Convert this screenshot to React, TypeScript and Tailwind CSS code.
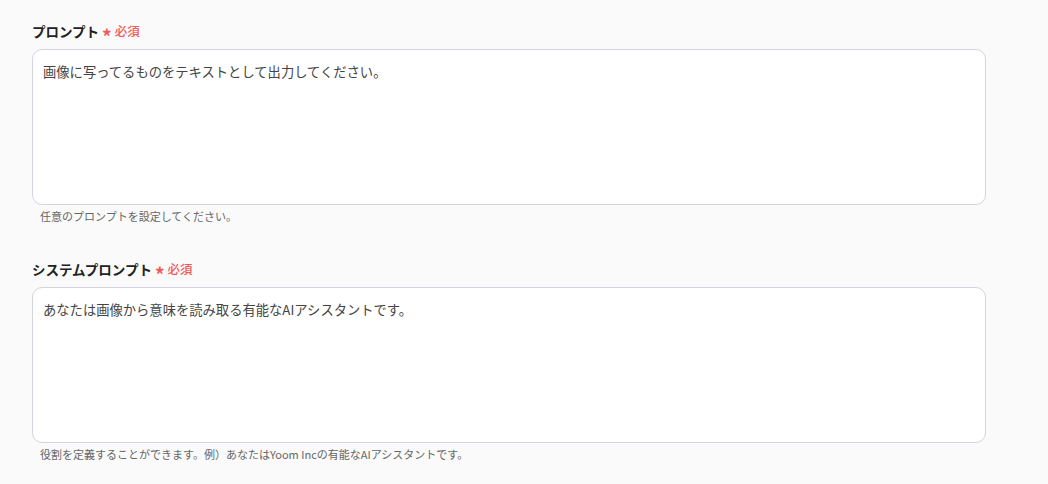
import React from 'react'

const font = { fontFamily: '"Noto Sans CJK JP", "Noto Sans", sans-serif' }

interface FieldProps {
  label: string
  value: string
  help: string
}

function PromptField({ label, value, help }: FieldProps) {
  return (
    <div className="flex flex-col">
      <div className="flex items-center h-5 mb-2">
        <span className="text-[13.5px] font-bold text-[#222]">{label}</span>
        <span className="ml-[3px] text-[19px] font-bold leading-none text-[#f05a5a] translate-y-[4px]">*</span>
        <span className="ml-[3px] text-[12.5px] font-medium text-[#f05a5a]">必須</span>
      </div>
      <textarea
        readOnly
        defaultValue={value}
        className="w-[954px] h-[156px] resize-none rounded-[10px] border border-[#d4d4de] bg-white px-[10px] pt-[12px] text-[13.3px] leading-5 text-[#444] outline-none"
        style={font}
      />
      <p className="mt-[3px] pl-2 text-[11px] leading-4 text-[#666]">{help}</p>
    </div>
  )
}

export default function App() {
  return (
    <div className="min-h-[484px] w-[1048px] bg-[#fafafa] pl-8 pt-[21px] flex flex-col gap-[35px]" style={font}>
      <PromptField
        label="プロンプト"
        value="画像に写ってるものをテキストとして出力してください。"
        help="任意のプロンプトを設定してください。"
      />
      <PromptField
        label="システムプロンプト"
        value="あなたは画像から意味を読み取る有能なAIアシスタントです。"
        help="役割を定義することができます。例）あなたはYoom Incの有能なAIアシスタントです。"
      />
    </div>
  )
}
